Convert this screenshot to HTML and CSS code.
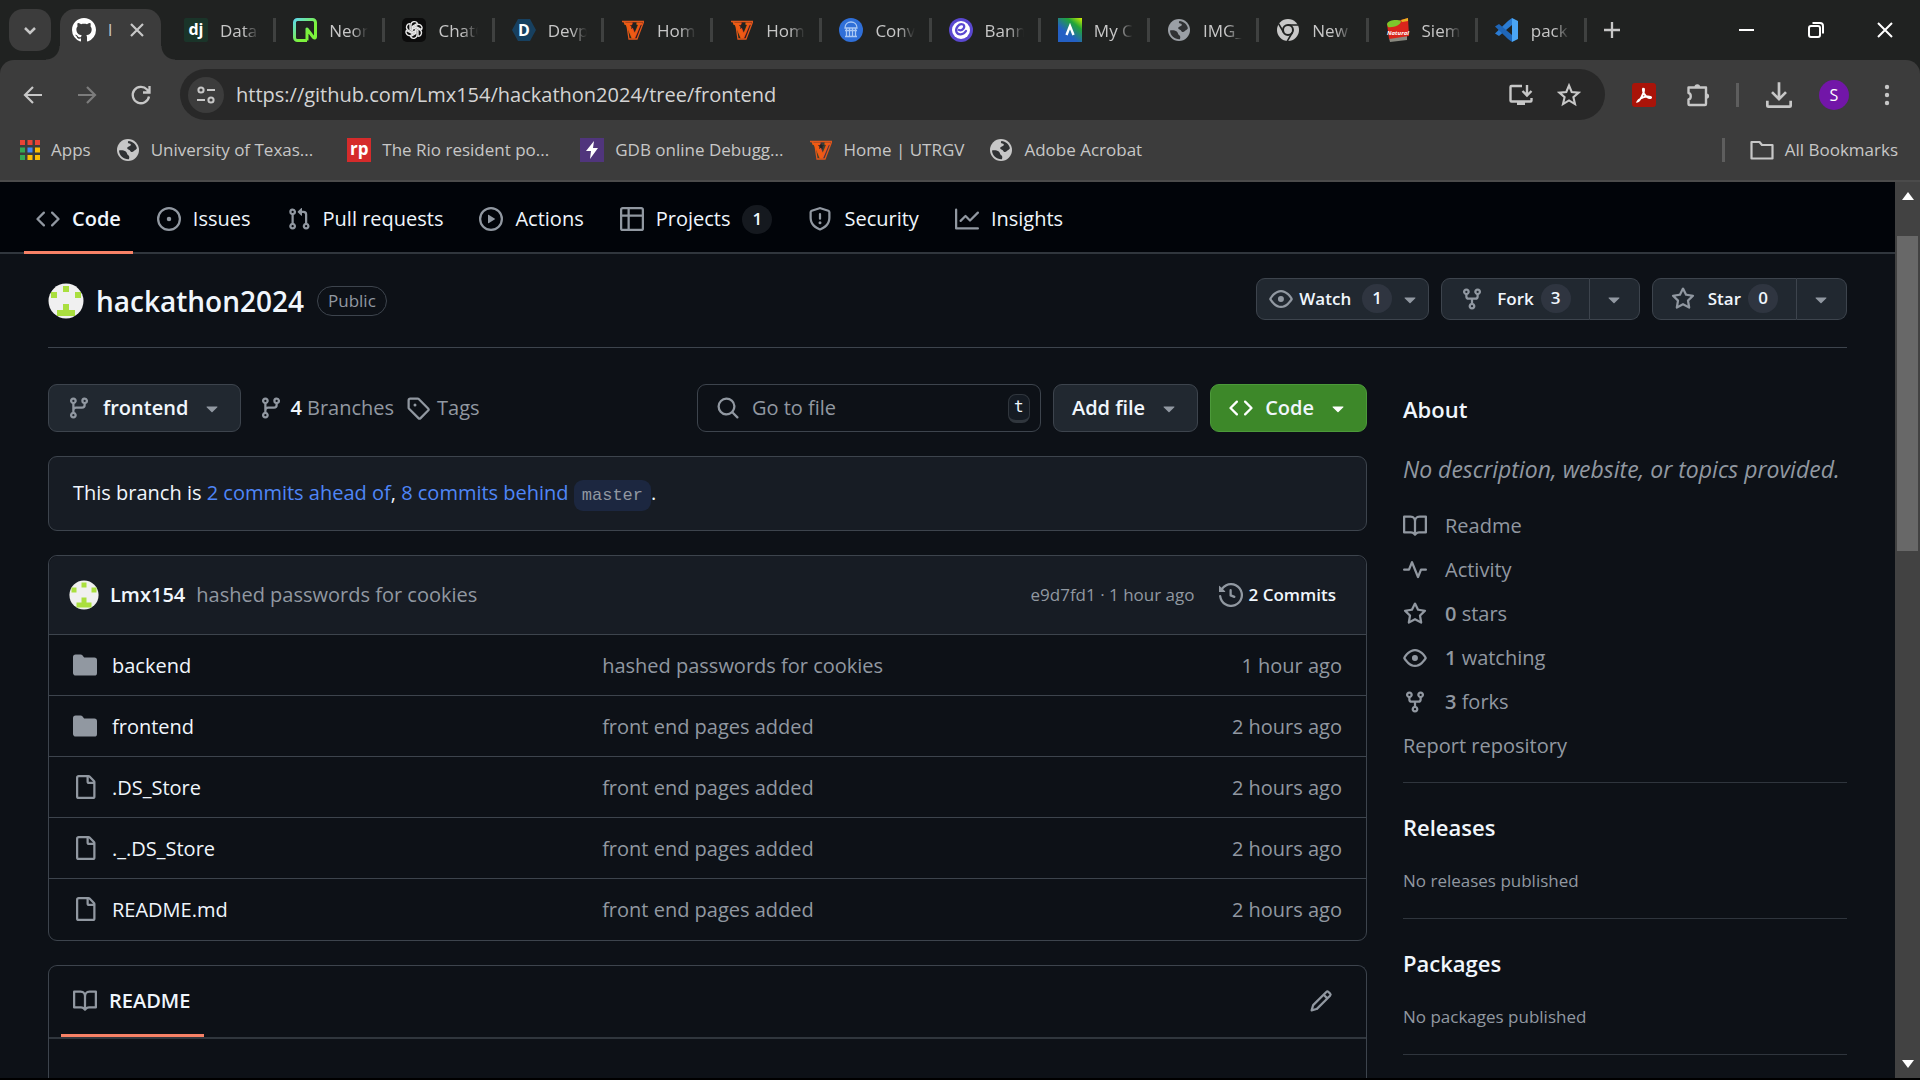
FILE: index.html
```
<!DOCTYPE html>
<html lang="en">
<head>
  <meta charset="UTF-8" />
  <meta name="viewport" content="width=device-width, initial-scale=1.0" />
  <title>Lmx154/hackathon2024 at frontend</title>
  <link rel="stylesheet" href="styles.css">
</head>
<body>
  <!-- icon sprite -->
  <svg class="sprite" aria-hidden="true">
    <symbol id="i-code" viewBox="0 0 16 16"><path d="m11.28 3.22 4.25 4.25a.75.75 0 0 1 0 1.06l-4.25 4.25a.749.749 0 0 1-1.275-.326.749.749 0 0 1 .215-.734L13.94 8l-3.72-3.72a.749.749 0 0 1 .326-1.275.749.749 0 0 1 .734.215Zm-6.56 0a.751.751 0 0 1 1.042.018.751.751 0 0 1 .018 1.042L2.06 8l3.72 3.72a.749.749 0 0 1-.326 1.275.749.749 0 0 1-.734-.215L.47 8.53a.75.75 0 0 1 0-1.06Z"/></symbol>
    <symbol id="i-issue" viewBox="0 0 16 16"><path d="M8 9.5a1.5 1.5 0 1 0 0-3 1.5 1.5 0 0 0 0 3Z"/><path d="M8 0a8 8 0 1 1 0 16A8 8 0 0 1 8 0ZM1.5 8a6.5 6.5 0 1 0 13 0 6.5 6.5 0 0 0-13 0Z"/></symbol>
    <symbol id="i-pull" viewBox="0 0 16 16"><path d="M1.5 3.25a2.25 2.25 0 1 1 3 2.122v5.256a2.251 2.251 0 1 1-1.5 0V5.372A2.25 2.25 0 0 1 1.5 3.25Zm5.677-.177L9.573.677A.25.25 0 0 1 10 .854V2.5h1A2.5 2.5 0 0 1 13.5 5v5.628a2.251 2.251 0 1 1-1.5 0V5a1 1 0 0 0-1-1h-1v1.646a.25.25 0 0 1-.427.177L7.177 3.427a.25.25 0 0 1 0-.354ZM3.75 2.5a.75.75 0 1 0 0 1.5.75.75 0 0 0 0-1.5Zm0 9.5a.75.75 0 1 0 0 1.5.75.75 0 0 0 0-1.5Zm8.25.75a.75.75 0 1 0 1.5 0 .75.75 0 0 0-1.5 0Z"/></symbol>
    <symbol id="i-play" viewBox="0 0 16 16"><path d="M8 0a8 8 0 1 1 0 16A8 8 0 0 1 8 0ZM1.5 8a6.5 6.5 0 1 0 13 0 6.5 6.5 0 0 0-13 0Zm4.879-2.773 4.264 2.559a.25.25 0 0 1 0 .428l-4.264 2.559A.25.25 0 0 1 6 10.559V5.442a.25.25 0 0 1 .379-.215Z"/></symbol>
    <symbol id="i-table" viewBox="0 0 16 16"><path d="M0 1.75C0 .784.784 0 1.75 0h12.5C15.216 0 16 .784 16 1.75v12.5A1.75 1.75 0 0 1 14.25 16H1.75A1.75 1.75 0 0 1 0 14.25ZM6.5 6.5v8h7.75a.25.25 0 0 0 .25-.25V6.5Zm8-1.5V1.75a.25.25 0 0 0-.25-.25H6.5V5Zm-13 1.5v7.75c0 .138.112.25.25.25H5v-8ZM5 5V1.5H1.75a.25.25 0 0 0-.25.25V5Z"/></symbol>
    <symbol id="i-shield" viewBox="0 0 16 16"><path d="M7.467.133a1.748 1.748 0 0 1 1.066 0l5.25 1.68A1.75 1.75 0 0 1 15 3.48V7c0 1.566-.32 3.182-1.303 4.682-.983 1.498-2.585 2.813-5.032 3.855a1.697 1.697 0 0 1-1.33 0c-2.447-1.042-4.049-2.357-5.032-3.855C1.32 10.182 1 8.566 1 7V3.48a1.75 1.75 0 0 1 1.217-1.667Zm.61 1.429a.25.25 0 0 0-.153 0l-5.25 1.68a.25.25 0 0 0-.174.238V7c0 1.358.275 2.666 1.057 3.86.784 1.194 2.121 2.34 4.366 3.297a.196.196 0 0 0 .154 0c2.245-.956 3.582-2.104 4.366-3.298C13.225 9.666 13.5 8.36 13.5 7V3.48a.251.251 0 0 0-.174-.237l-5.25-1.68ZM8.75 4.75v3a.75.75 0 0 1-1.5 0v-3a.75.75 0 0 1 1.5 0ZM9 10.5a1 1 0 1 1-2 0 1 1 0 0 1 2 0Z"/></symbol>
    <symbol id="i-graph" viewBox="0 0 16 16"><path d="M1.5 1.75V13.5h13.75a.75.75 0 0 1 0 1.5H.75a.75.75 0 0 1-.75-.75V1.75a.75.75 0 0 1 1.5 0Zm14.28 2.53-5.25 5.25a.75.75 0 0 1-1.06 0L7 7.06 4.28 9.78a.751.751 0 0 1-1.042-.018.751.751 0 0 1-.018-1.042l3.25-3.25a.75.75 0 0 1 1.06 0L10 7.94l4.72-4.72a.751.751 0 0 1 1.042.018.751.751 0 0 1 .018 1.042Z"/></symbol>
    <symbol id="i-eye" viewBox="0 0 16 16"><path d="M8 2c1.981 0 3.671.992 4.933 2.078 1.27 1.091 2.187 2.345 2.637 3.023a1.62 1.62 0 0 1 0 1.798c-.45.678-1.367 1.932-2.637 3.023C11.67 13.008 9.981 14 8 14c-1.981 0-3.671-.992-4.933-2.078C1.797 10.83.88 9.576.43 8.898a1.62 1.62 0 0 1 0-1.798c.45-.677 1.367-1.931 2.637-3.022C4.33 2.992 6.019 2 8 2ZM1.679 7.932a.12.12 0 0 0 0 .136c.411.622 1.241 1.75 2.366 2.717C5.176 11.758 6.527 12.5 8 12.5c1.473 0 2.825-.742 3.955-1.715 1.124-.967 1.954-2.096 2.366-2.717a.12.12 0 0 0 0-.136c-.412-.621-1.242-1.75-2.366-2.717C10.824 4.242 9.473 3.5 8 3.5c-1.473 0-2.825.742-3.955 1.715-1.124.967-1.954 2.096-2.366 2.717ZM8 10a2 2 0 1 1-.001-3.999A2 2 0 0 1 8 10Z"/></symbol>
    <symbol id="i-fork" viewBox="0 0 16 16"><path d="M5 5.372v.878c0 .414.336.75.75.75h4.5a.75.75 0 0 0 .75-.75v-.878a2.25 2.25 0 1 1 1.5 0v.878a2.25 2.25 0 0 1-2.25 2.25h-1.5v2.128a2.251 2.251 0 1 1-1.5 0V8.5h-1.5A2.25 2.25 0 0 1 3.5 6.25v-.878a2.25 2.25 0 1 1 1.5 0ZM5 3.25a.75.75 0 1 0-1.5 0 .75.75 0 0 0 1.5 0Zm6.75.75a.75.75 0 1 0 0-1.5.75.75 0 0 0 0 1.5Zm-3 8.75a.75.75 0 1 0-1.5 0 .75.75 0 0 0 1.5 0Z"/></symbol>
    <symbol id="i-star" viewBox="0 0 16 16"><path d="M8 .25a.75.75 0 0 1 .673.418l1.882 3.815 4.21.612a.75.75 0 0 1 .416 1.279l-3.046 2.97.719 4.192a.751.751 0 0 1-1.088.791L8 12.347l-3.766 1.98a.75.75 0 0 1-1.088-.79l.72-4.194L.818 6.374a.75.75 0 0 1 .416-1.28l4.21-.611L7.327.668A.75.75 0 0 1 8 .25Zm0 2.445L6.615 5.5a.75.75 0 0 1-.564.41l-3.097.45 2.24 2.184a.75.75 0 0 1 .216.664l-.528 3.084 2.769-1.456a.75.75 0 0 1 .698 0l2.77 1.456-.53-3.084a.75.75 0 0 1 .216-.664l2.24-2.183-3.096-.45a.75.75 0 0 1-.564-.41L8 2.694Z"/></symbol>
    <symbol id="i-branch" viewBox="0 0 16 16"><path d="M9.5 3.25a2.25 2.25 0 1 1 3 2.122V6A2.5 2.5 0 0 1 10 8.5H6a1 1 0 0 0-1 1v1.128a2.251 2.251 0 1 1-1.5 0V5.372a2.25 2.25 0 1 1 1.5 0v1.836A2.493 2.493 0 0 1 6 7h4a1 1 0 0 0 1-1v-.628A2.25 2.25 0 0 1 9.5 3.25Zm-6 0a.75.75 0 1 0 1.5 0 .75.75 0 0 0-1.5 0Zm8.25-.75a.75.75 0 1 0 0 1.5.75.75 0 0 0 0-1.5ZM4.25 12a.75.75 0 1 0 0 1.5.75.75 0 0 0 0-1.5Z"/></symbol>
    <symbol id="i-tag" viewBox="0 0 16 16"><path d="M1 7.775V2.75C1 1.784 1.784 1 2.75 1h5.025c.464 0 .91.184 1.238.513l6.25 6.25a1.75 1.75 0 0 1 0 2.474l-5.026 5.026a1.75 1.75 0 0 1-2.474 0l-6.25-6.25A1.752 1.752 0 0 1 1 7.775Zm1.5 0c0 .066.026.13.073.177l6.25 6.25a.25.25 0 0 0 .354 0l5.025-5.025a.25.25 0 0 0 0-.354l-6.25-6.25a.25.25 0 0 0-.177-.073H2.75a.25.25 0 0 0-.25.25ZM6 5a1 1 0 1 1 0 2 1 1 0 0 1 0-2Z"/></symbol>
    <symbol id="i-search" viewBox="0 0 16 16"><path d="M10.68 11.74a6 6 0 0 1-7.922-8.982 6 6 0 0 1 8.982 7.922l3.04 3.04a.749.749 0 0 1-.326 1.275.749.749 0 0 1-.734-.215ZM11.5 7a4.499 4.499 0 1 0-8.997 0A4.499 4.499 0 0 0 11.5 7Z"/></symbol>
    <symbol id="i-history" viewBox="0 0 16 16"><path d="m.427 1.927 1.215 1.215a8.002 8.002 0 1 1-1.6 5.685.75.75 0 1 1 1.493-.154 6.5 6.5 0 1 0 1.18-4.458l1.358 1.358A.25.25 0 0 1 3.896 6H.25A.25.25 0 0 1 0 5.75V2.104a.25.25 0 0 1 .427-.177ZM7.75 4a.75.75 0 0 1 .75.75v2.992l2.028.812a.75.75 0 0 1-.557 1.392l-2.5-1A.751.751 0 0 1 7 8.25v-3.5A.75.75 0 0 1 7.75 4Z"/></symbol>
    <symbol id="i-folder" viewBox="0 0 16 16"><path d="M1.75 1A1.75 1.75 0 0 0 0 2.75v10.5C0 14.216.784 15 1.75 15h12.5A1.75 1.75 0 0 0 16 13.25v-8.5A1.75 1.75 0 0 0 14.25 3H7.5a.25.25 0 0 1-.2-.1l-.9-1.2C6.07 1.26 5.55 1 5 1H1.75Z"/></symbol>
    <symbol id="i-file" viewBox="0 0 16 16"><path d="M2 1.75C2 .784 2.784 0 3.75 0h6.586c.464 0 .909.184 1.237.513l2.914 2.914c.329.328.513.773.513 1.237v9.586A1.75 1.75 0 0 1 13.25 16h-9.5A1.75 1.75 0 0 1 2 14.25Zm1.75-.25a.25.25 0 0 0-.25.25v12.5c0 .138.112.25.25.25h9.5a.25.25 0 0 0 .25-.25V6h-2.75A1.75 1.75 0 0 1 9 4.25V1.5Zm6.75.062V4.25c0 .138.112.25.25.25h2.688l-.011-.013-2.914-2.914-.013-.011Z"/></symbol>
    <symbol id="i-book" viewBox="0 0 16 16"><path d="M0 1.75A.75.75 0 0 1 .75 1h4.253c1.227 0 2.317.59 3 1.501A3.743 3.743 0 0 1 11.006 1h4.245a.75.75 0 0 1 .75.75v10.5a.75.75 0 0 1-.75.75h-4.507a2.25 2.25 0 0 0-1.591.659l-.622.621a.75.75 0 0 1-1.06 0l-.622-.621A2.25 2.25 0 0 0 5.258 13H.75a.75.75 0 0 1-.75-.75Zm7.251 10.324.004-5.073-.002-2.253A2.25 2.25 0 0 0 5.003 2.5H1.5v9h3.757a3.75 3.75 0 0 1 1.994.574ZM8.755 4.75l-.004 7.322a3.752 3.752 0 0 1 1.992-.572H14.5v-9h-3.495a2.25 2.25 0 0 0-2.25 2.25Z"/></symbol>
    <symbol id="i-pulse" viewBox="0 0 16 16"><path d="M6 2c.306 0 .582.187.696.471L10 10.731l1.304-3.26A.751.751 0 0 1 12 7h3.25a.75.75 0 0 1 0 1.5h-2.742l-1.812 4.528a.751.751 0 0 1-1.392 0L6 4.77 4.696 8.03A.75.75 0 0 1 4 8.5H.75a.75.75 0 0 1 0-1.5h2.742l1.812-4.529A.751.751 0 0 1 6 2Z"/></symbol>
    <symbol id="i-pencil" viewBox="0 0 16 16"><path d="M11.013 1.427a1.75 1.75 0 0 1 2.474 0l1.086 1.086a1.75 1.75 0 0 1 0 2.474l-8.61 8.61c-.21.21-.47.364-.756.445l-3.251.93a.75.75 0 0 1-.927-.928l.929-3.25c.081-.286.235-.547.445-.758l8.61-8.61Zm.176 4.823L9.75 4.81l-6.286 6.287a.253.253 0 0 0-.064.108l-.558 1.953 1.953-.558a.253.253 0 0 0 .108-.064Zm1.238-3.763a.25.25 0 0 0-.354 0L10.811 3.75l1.439 1.44 1.263-1.263a.25.25 0 0 0 0-.354Z"/></symbol>
    <symbol id="i-caret" viewBox="0 0 16 16"><path d="m4.427 7.427 3.396 3.396a.25.25 0 0 0 .354 0l3.396-3.396A.25.25 0 0 0 11.396 7H4.604a.25.25 0 0 0-.177.427Z"/></symbol>
    <symbol id="i-github" viewBox="0 0 16 16"><path fill="#fff" d="M8 0c4.42 0 8 3.58 8 8a8.013 8.013 0 0 1-5.45 7.59c-.4.08-.55-.17-.55-.38 0-.27.01-1.13.01-2.2 0-.75-.25-1.23-.54-1.48 1.78-.2 3.65-.88 3.65-3.95 0-.88-.31-1.59-.82-2.15.08-.2.36-1.02-.08-2.12 0 0-.67-.22-2.2.82-.64-.18-1.32-.27-2-.27-.68 0-1.36.09-2 .27-1.53-1.03-2.2-.82-2.2-.82-.44 1.1-.16 1.92-.08 2.12-.51.56-.82 1.28-.82 2.15 0 3.06 1.86 3.75 3.64 3.95-.23.2-.44.55-.51 1.07-.46.21-1.61.55-2.33-.66-.15-.24-.6-.83-1.23-.82-.67.01-.27.38.01.53.34.19.73.9.82 1.13.16.45.68 1.31 2.69.94 0 .67.01 1.3.01 1.49 0 .21-.15.45-.55.38A7.995 7.995 0 0 1 0 8c0-4.42 3.58-8 8-8Z"/></symbol>
    <symbol id="i-globe" viewBox="0 0 24 24"><circle cx="12" cy="12" r="11" fill="currentColor"/><path fill="#303234" d="M3 12.500c2-.6 5-.3 6.800 1 1.500 1.100.8 2.700 2.200 3.500 1.300.8 1.800 2.500.8 4.200C7.800 21.500 3.200 17.800 3 12.500ZM12.500 3c4.200.3 7.600 3.300 8.400 7.300-.8 1.700-2.300 1.700-3.300 2.900-1 1.200-2.900.9-3.500-.5-.5-1.200-2.900-.8-2.900-2.600 0-1.500 2-1.500 3.100-2.300 1.200-.9.300-2.300-1-2.300-1.500 0-1.900-1.600-.8-2.500Z"/></symbol>
    <symbol id="i-vaquero" viewBox="0 0 24 24"><path fill="none" stroke="#e2571b" stroke-width="1.300" d="M1 3.500h22M3 4l3 3.500 2 13.500h8l5-13 1.500-4"/><text x="12" y="20" text-anchor="middle" font-family="DejaVu Serif, serif" font-weight="700" font-size="21" fill="#f05a14" stroke="#f05a14">V</text><path fill="#222" d="m12 5 .9 2.200 2.300.1-1.800 1.500.6 2.300-2-1.300-2 1.300.6-2.300-1.800-1.500 2.300-.1Z"/></symbol>
    <symbol id="i-avatar" viewBox="0 0 36 36"><circle cx="18" cy="18" r="17.500" fill="#f0f0f0"/><path fill="#aadf3f" d="M15 3h6v6h-6zM3 9h6v6H3zM27 9h6v6h-6zM15 21h6v6h6v6H9v-6h6z"/></symbol>
  </svg>

  <header class="browser">
    <div class="tabstrip">
      <button class="tab-search" aria-label="Search tabs"><svg class="ico" viewBox="0 0 24 24"><path class="line" stroke-width="2.500" d="m7 10 5 5 5-5"/></svg></button>
      <div class="tab-active">
        <svg class="ico"><use href="#i-github"/></svg>
        <span>l</span>
        <button class="plain" aria-label="Close tab"><svg class="ico-sm" viewBox="0 0 20 20"><path class="line" stroke-width="2.200" d="m4 4 12 12M16 4 4 16"/></svg></button>
      </div>
      <div class="tabs">
        <button class="tab"><svg class="ico" viewBox="0 0 24 24"><rect width="24" height="24" rx="2" fill="#1a3429"/><text x="12" y="17" text-anchor="middle" font-family="Open Sans, sans-serif" font-weight="700" font-size="16" fill="#fff">dj</text></svg><span>Datab</span></button>
        <button class="tab"><svg class="ico" viewBox="0 0 24 24"><defs><linearGradient id="neon" x1="0" y1="0" x2="1" y2="1"><stop offset="0" stop-color="#5fd9e8"/><stop offset=".6" stop-color="#7cf23c"/></linearGradient></defs><path fill="none" stroke="url(#neon)" stroke-width="3" stroke-linejoin="round" d="M14 22.500H4.500a3 3 0 0 1-3-3v-15a3 3 0 0 1 3-3h15a3 3 0 0 1 3 3V19c0 1-1 1.500-2 .5l-6.500-8.500V22.500"/></svg><span>Neon</span></button>
        <button class="tab"><svg class="ico" viewBox="0 0 24 24"><rect width="24" height="24" rx="5" fill="#0c0c0c"/><g fill="none" stroke="#e8e8e8" stroke-width="1.300"><path id="petal" d="M9 12V7a3.500 3.500 0 0 1 6.500-1.700l-5 3v4.500"/><use href="#petal" transform="rotate(60 12 12)"/><use href="#petal" transform="rotate(120 12 12)"/><use href="#petal" transform="rotate(180 12 12)"/><use href="#petal" transform="rotate(240 12 12)"/><use href="#petal" transform="rotate(300 12 12)"/></g></svg><span>ChatG</span></button>
        <button class="tab"><svg class="ico" viewBox="0 0 24 24"><path fill="#17405f" d="M6 1h12l6 11-6 11H6L0 12Z"/><text x="12" y="18" text-anchor="middle" font-family="Open Sans, sans-serif" font-weight="700" font-size="16" fill="#fff">D</text></svg><span>Devp</span></button>
        <button class="tab"><svg class="ico"><use href="#i-vaquero"/></svg><span>Hom</span></button>
        <button class="tab"><svg class="ico"><use href="#i-vaquero"/></svg><span>Hom</span></button>
        <button class="tab"><svg class="ico" viewBox="0 0 24 24"><circle cx="12" cy="12" r="12" fill="#2f6fd8"/><path fill="none" stroke="#a9c8f5" stroke-width="1.300" d="M6 10c0-8 12-8 12 0ZM6 18.500h12M7.500 10v8M10.500 10v8M13.500 10v8M16.500 10v8M6 12.500h12"/></svg><span>Conv</span></button>
        <button class="tab"><svg class="ico" viewBox="0 0 24 24"><circle cx="12" cy="12" r="12" fill="#5a48d0"/><circle cx="12" cy="12" r="9" fill="#fff"/><path fill="none" stroke="#5a48d0" stroke-width="2.300" stroke-linecap="round" d="M10 12c4 1.500 7-4 4-5.500C10 5 6 10 7.500 14c1.500 3.500 7 3 9.500-1"/></svg><span>Bann</span></button>
        <button class="tab"><svg class="ico" viewBox="0 0 24 24"><defs><linearGradient id="myc" x1="1" y1="0" x2=".2" y2="1"><stop offset="0" stop-color="#d6f000"/><stop offset=".3" stop-color="#22a637"/><stop offset=".7" stop-color="#2460c4"/></linearGradient></defs><path fill="url(#myc)" d="M0 0h24v24H0z"/><path fill="none" stroke="#fff" stroke-width="2.400" d="m8.500 17 3.500-9 3.500 9"/></svg><span>My C</span></button>
        <button class="tab"><svg class="ico gray"><use href="#i-globe"/></svg><span>IMG_</span></button>
        <button class="tab"><svg class="ico" viewBox="0 0 24 24"><circle cx="12" cy="12" r="11" fill="#c8c8c8"/><circle cx="12" cy="12" r="5" fill="#c8c8c8" stroke="#202221" stroke-width="2"/><path fill="none" stroke="#202221" stroke-width="1.600" d="M12 7h10M7.700 14.500l-5-8.600M16.300 14.500l-5 8.600"/></svg><span>New</span></button>
        <button class="tab"><svg class="ico" viewBox="0 0 24 24"><path fill="#8a8a80" d="m3 20 18-3v5L4 24Z"/><path fill="#d9251c" d="m1 6 21-6 1 18L3 21Z"/><path fill="#7ec62b" d="M1 6c1-4 10-5 14-3 0 4-8 7-13 6Z"/><path fill="#e8b020" d="m15 2 7-2v3l-6 1Z"/><text x="12" y="17" text-anchor="middle" font-family="Open Sans, sans-serif" font-style="italic" font-weight="700" font-size="6" fill="#fff">Natural</text></svg><span>Siem</span></button>
        <button class="tab"><svg class="ico" viewBox="0 0 24 24"><path fill="#2b7cd3" d="M17 0v7L4 18 0 15.500 13 3Z"/><path fill="#1f66b8" d="M17 24v-7L4 6 0 8.500 13 21Z"/><path fill="#4aa5f5" d="m17 0 6 3v18l-6 3Z"/></svg><span>pack</span></button>
      </div>
      <button class="plain new-tab" aria-label="New tab"><svg class="ico-sm" viewBox="0 0 20 20"><path class="line" stroke-width="2.300" d="M10 2v16M2 10h16"/></svg></button>
      <div class="window-controls">
        <button class="plain" aria-label="Minimize"><svg class="ico-sm" viewBox="0 0 20 20"><path class="line" stroke-width="2" d="M2 10h15"/></svg></button>
        <button class="plain" aria-label="Restore"><svg class="ico-sm" viewBox="0 0 20 20"><rect class="line" stroke-width="2" x="3" y="6" width="11" height="11" rx="2"/><path class="line" stroke-width="2" d="M6.500 3H14a3 3 0 0 1 3 3v7.500"/></svg></button>
        <button class="plain" aria-label="Close"><svg class="ico-sm" viewBox="0 0 20 20"><path class="line" stroke-width="2" d="m3 3 14 14M17 3 3 17"/></svg></button>
      </div>
    </div>

    <div class="toolbar">
      <div class="nav-buttons">
        <button class="plain" aria-label="Back"><svg class="ico" viewBox="0 0 24 24"><path class="line" stroke-width="2.200" d="M21 12H4M12 4l-8 8 8 8"/></svg></button>
        <button class="plain dim" aria-label="Forward"><svg class="ico" viewBox="0 0 24 24"><path class="line" stroke-width="2.200" d="M3 12h17M12 4l8 8-8 8"/></svg></button>
        <button class="plain" aria-label="Reload"><svg class="ico" viewBox="0 0 24 24"><path class="line" stroke-width="2.300" d="M20 13.500A8.200 8.200 0 1 1 18 6.500l2 2.500M20.500 3v6.500H14"/></svg></button>
      </div>
      <div class="omnibox">
        <button class="site-info" aria-label="Site information"><svg class="ico" viewBox="0 0 24 24"><circle class="line" stroke-width="2" cx="7" cy="7" r="2.600"/><circle class="line" stroke-width="2" cx="17" cy="17" r="2.600"/><path class="line" stroke-width="2" d="M13 7h8M3 17h8"/></svg></button>
        <input class="url" type="text" aria-label="Address" value="https://github.com/Lmx154/hackathon2024/tree/frontend">
        <button class="plain" aria-label="Install"><svg class="ico" viewBox="0 0 24 24"><path class="line" stroke-width="2.400" d="M13 3H2.500a1 1 0 0 0-1 1v13.500a1 1 0 0 0 1 1h19a1 1 0 0 0 1-1V15M18 2v10M13.500 8l4.500 4.500L22.500 8"/><path d="M8 18.500h8V22H8Z"/></svg></button>
        <button class="plain" aria-label="Bookmark"><svg class="ico" viewBox="0 0 24 24"><path class="line" stroke-width="2.100" d="m12 2.500 2.700 6.500 7 .6-5.300 4.600 1.600 6.900-6-3.700-6 3.700 1.600-6.900L2.300 9.600l7-.6Z"/></svg></button>
      </div>
      <div class="extensions">
        <svg class="ico" viewBox="0 0 24 24"><rect width="24" height="24" rx="3" fill="#a91409"/><path fill="none" stroke="#fff" stroke-width="1.900" d="M5.500 18.500c2-.5 7-8 6.500-12.500-1.500-1.500-1.500 1.500 0 4.500 1.500 2.800 4.500 5 6.500 4.500s-1-2-4-1.500-8 2.500-9 5Z"/></svg>
        <button class="plain" aria-label="Extensions"><svg class="ico" viewBox="0 0 24 24"><path class="line" stroke-width="2.400" stroke-linejoin="round" d="M2.500 4.500h17.500v16.500a1 1 0 0 1-1 1H3.500a1 1 0 0 1-1-1V16.500c3-.5 3-6 0-6.500Z"/><path d="M8.500 4a2.800 2.800 0 0 1 5.600 0ZM20.500 10.500a2.600 2.600 0 0 1 0 5.200Z"/></svg></button>
        <span class="divider"></span>
        <button class="plain" aria-label="Downloads"><svg class="ico-lg" viewBox="0 0 24 24"><path class="line" stroke-width="2.300" d="M12 1v14M6 9.500l6 6 6-6M2 17v4a1 1 0 0 0 1 1h18a1 1 0 0 0 1-1v-4"/></svg></button>
        <button class="profile">S</button>
        <button class="plain" aria-label="Menu"><svg class="ico" viewBox="0 0 24 24"><circle cx="12" cy="4" r="2.200"/><circle cx="12" cy="12" r="2.200"/><circle cx="12" cy="20" r="2.200"/></svg></button>
      </div>
    </div>

    <nav class="bookmarks">
      <a href="#"><svg class="ico-sm" viewBox="0 0 20 20"><path fill="#ea4335" d="M0 0h5v5H0zM7.500 0h5v5h-5zM15 0h5v5h-5z"/><path fill="#34a853" d="M0 7.500h5v5H0zM0 15h5v5H0z"/><path fill="#4285f4" d="M7.500 7.500h5v5h-5z"/><path fill="#fbbc04" d="M15 7.500h5v5h-5zM7.500 15h5v5h-5zM15 15h5v5h-5z"/></svg>Apps</a>
      <a href="#"><svg class="ico"><use href="#i-globe"/></svg>University of Texas...</a>
      <a class="wide" href="#"><span class="fav fav-rp">rp</span>The Rio resident po...</a>
      <a href="#"><svg class="ico" viewBox="0 0 24 24"><path fill="#50357c" d="M0 0h24v24H0z"/><path fill="#fff" d="M14 3 6 13h5l-1 8 8-11h-5Z"/></svg>GDB online Debugg...</a>
      <a href="#"><svg class="ico"><use href="#i-vaquero"/></svg>Home | UTRGV</a>
      <a href="#"><svg class="ico"><use href="#i-globe"/></svg>Adobe Acrobat</a>
      <span class="divider push"></span>
      <a href="#"><svg class="ico" viewBox="0 0 24 24"><path class="line" stroke-width="2.200" stroke-linejoin="round" d="M1.500 4h8l2.500 3h10.500v13.500h-21Z"/></svg>All Bookmarks</a>
    </nav>
  </header>

  <div class="viewport">
    <div class="page">
      <nav class="repo-nav">
        <a class="current" href="#"><svg class="ico"><use href="#i-code"/></svg>Code</a>
        <a href="#"><svg class="ico"><use href="#i-issue"/></svg>Issues</a>
        <a href="#"><svg class="ico"><use href="#i-pull"/></svg>Pull requests</a>
        <a href="#"><svg class="ico"><use href="#i-play"/></svg>Actions</a>
        <a href="#"><svg class="ico"><use href="#i-table"/></svg>Projects<span class="counter">1</span></a>
        <a href="#"><svg class="ico"><use href="#i-shield"/></svg>Security</a>
        <a href="#"><svg class="ico"><use href="#i-graph"/></svg>Insights</a>
      </nav>

      <main class="container">
        <div class="repo-head">
          <svg class="avatar"><use href="#i-avatar"/></svg>
          <h1>hackathon2024</h1>
          <span class="visibility">Public</span>
          <div class="actions">
            <button class="btn small watch"><svg class="ico"><use href="#i-eye"/></svg>Watch<span class="counter">1</span><svg class="ico"><use href="#i-caret"/></svg></button>
            <div class="btn-group">
              <button class="btn small"><svg class="ico"><use href="#i-fork"/></svg>Fork<span class="counter">3</span></button>
              <button class="btn small more" aria-label="Fork options"><svg class="ico"><use href="#i-caret"/></svg></button>
            </div>
            <div class="btn-group">
              <button class="btn small"><svg class="ico"><use href="#i-star"/></svg>Star<span class="counter">0</span></button>
              <button class="btn small more" aria-label="Star options"><svg class="ico"><use href="#i-caret"/></svg></button>
            </div>
          </div>
        </div>

        <div class="columns">
          <div class="main-col">
            <div class="file-nav">
              <button class="btn branch"><svg class="ico"><use href="#i-branch"/></svg>frontend<svg class="ico"><use href="#i-caret"/></svg></button>
              <a class="stat" href="#"><svg class="ico"><use href="#i-branch"/></svg><span><strong>4</strong> Branches</span></a>
              <a class="stat" href="#"><svg class="ico"><use href="#i-tag"/></svg>Tags</a>
              <label class="go-to">
                <svg class="ico"><use href="#i-search"/></svg>
                <input type="text" placeholder="Go to file" aria-label="Go to file">
                <kbd>t</kbd>
              </label>
              <button class="btn">Add file<svg class="ico"><use href="#i-caret"/></svg></button>
              <button class="btn green"><svg class="ico"><use href="#i-code"/></svg>Code<svg class="ico"><use href="#i-caret"/></svg></button>
            </div>

            <div class="box branch-info">
              This branch is <a href="#">2 commits ahead of</a>, <a href="#">8 commits behind</a> <code>master</code>.
            </div>

            <div class="box files">
              <div class="commit">
                <svg class="avatar"><use href="#i-avatar"/></svg>
                <a class="author" href="#">Lmx154</a>
                <a class="message" href="#">hashed passwords for cookies</a>
                <span class="sha">e9d7fd1 · 1 hour ago</span>
                <a class="count" href="#"><svg class="ico"><use href="#i-history"/></svg>2 Commits</a>
              </div>
              <table>
                <tr><td class="name"><svg class="ico"><use href="#i-folder"/></svg><a href="#">backend</a></td><td>hashed passwords for cookies</td><td class="date">1 hour ago</td></tr>
                <tr><td class="name"><svg class="ico"><use href="#i-folder"/></svg><a href="#">frontend</a></td><td>front end pages added</td><td class="date">2 hours ago</td></tr>
                <tr><td class="name"><svg class="ico"><use href="#i-file"/></svg><a href="#">.DS_Store</a></td><td>front end pages added</td><td class="date">2 hours ago</td></tr>
                <tr><td class="name"><svg class="ico"><use href="#i-file"/></svg><a href="#">._.DS_Store</a></td><td>front end pages added</td><td class="date">2 hours ago</td></tr>
                <tr><td class="name"><svg class="ico"><use href="#i-file"/></svg><a href="#">README.md</a></td><td>front end pages added</td><td class="date">2 hours ago</td></tr>
              </table>
            </div>

            <div class="box readme">
              <div class="readme-head">
                <a class="readme-tab" href="#"><svg class="ico"><use href="#i-book"/></svg>README</a>
                <button class="plain edit" aria-label="Edit file"><svg class="ico"><use href="#i-pencil"/></svg></button>
              </div>
            </div>
          </div>

          <aside class="sidebar">
            <section class="about">
              <h2>About</h2>
              <p class="empty">No description, website, or topics provided.</p>
              <ul>
                <li><a href="#"><svg class="ico"><use href="#i-book"/></svg>Readme</a></li>
                <li><a href="#"><svg class="ico"><use href="#i-pulse"/></svg>Activity</a></li>
                <li><a href="#"><svg class="ico"><use href="#i-star"/></svg><span><strong>0</strong> stars</span></a></li>
                <li><a href="#"><svg class="ico"><use href="#i-eye"/></svg><span><strong>1</strong> watching</span></a></li>
                <li><a href="#"><svg class="ico"><use href="#i-fork"/></svg><span><strong>3</strong> forks</span></a></li>
                <li><a href="#">Report repository</a></li>
              </ul>
            </section>
            <section>
              <h2>Releases</h2>
              <p>No releases published</p>
            </section>
            <section>
              <h2>Packages</h2>
              <p>No packages published</p>
            </section>
          </aside>
        </div>
      </main>
    </div>

    <div class="scrollbar">
      <svg class="arrow" viewBox="0 0 12 8"><path d="m6 0 6 8H0Z"/></svg>
      <div class="thumb"></div>
      <svg class="arrow" viewBox="0 0 12 8"><path d="M0 0h12L6 8Z"/></svg>
    </div>
  </div>
</body>
</html>
```

FILE: styles.css
```
* {
  box-sizing: border-box;
}

body {
  margin: 0;
  height: 100vh;
  display: flex;
  flex-direction: column;
  overflow: hidden;
  background: #000;
  color: #f0f6fc;
  font-family: "Open Sans", "Noto Sans", sans-serif;
  font-size: 20px;
  line-height: 28px;
}

a {
  color: inherit;
  text-decoration: none;
}

h1, h2, p, ul {
  margin: 0;
  padding: 0;
  font-weight: 600;
}

button, input {
  font: inherit;
  color: inherit;
}

svg {
  fill: currentColor;
  flex: none;
}

.sprite {
  position: absolute;
  width: 0;
  height: 0;
}

.ico {
  width: 24px;
  height: 24px;
}

.ico-sm {
  width: 20px;
  height: 20px;
}

.ico-lg {
  width: 28px;
  height: 28px;
}

.line {
  fill: none;
  stroke: currentColor;
}

.plain {
  display: flex;
  padding: 0;
  border: 0;
  background: none;
}

.divider {
  width: 3px;
  height: 24px;
  background: #5e5e5e;
}

/* browser window */
.browser {
  flex: none;
  background: #202221;
  color: #c7c7c7;
  border-bottom: 2px solid #4b4b4b;
  font-size: 17px;
}

.tabstrip {
  display: flex;
  align-items: center;
  height: 60px;
  padding-left: 9px;
}

.tab-search {
  display: flex;
  align-items: center;
  justify-content: center;
  width: 42px;
  height: 42px;
  padding: 0;
  border: 0;
  border-radius: 14px;
  background: #3c3c3c;
}

.tab-active {
  position: relative;
  display: flex;
  align-items: center;
  align-self: flex-end;
  gap: 12px;
  width: 101px;
  height: 51px;
  margin-left: 9px;
  padding: 0 14px 9px 12px;
  border-radius: 15px 15px 0 0;
  background: #3c3c3c;
}

/* curved feet of the active tab */
.tab-active::before,
.tab-active::after {
  content: "";
  position: absolute;
  bottom: 0;
  width: 14px;
  height: 14px;
}

.tab-active::before {
  right: 100%;
  background: radial-gradient(circle at 0 0, transparent 13px, #3c3c3c 14px);
}

.tab-active::after {
  left: 100%;
  background: radial-gradient(circle at 100% 0, transparent 13px, #3c3c3c 14px);
}

.tab-active span {
  width: 6px;
}

.tab-active .plain {
  margin-left: auto;
}

.tabs {
  flex: 1;
  display: grid;
  grid-template-columns: repeat(13, minmax(0, 1fr));
  margin-left: 6px;
}

.tab {
  display: flex;
  align-items: center;
  gap: 12px;
  height: 24px;
  padding: 0 14px 0 17px;
  border: 0;
  border-right: 3px solid #3f4140;
  background: none;
}

.tab span {
  flex: 1;
  overflow: hidden;
  padding-top: 2px;
  text-align: left;
  white-space: nowrap;
  -webkit-mask-image: linear-gradient(90deg, #000 60%, transparent);
  mask-image: linear-gradient(90deg, #000 60%, transparent);
}

.tab .gray {
  color: #9a9fa5;
}

.new-tab {
  margin: 0 115px 0 15px;
}

.window-controls {
  display: flex;
  gap: 49px;
  padding-right: 25px;
  color: #fff;
}

.toolbar {
  display: flex;
  align-items: center;
  height: 69px;
  padding: 0 21px;
  border-radius: 14px 14px 0 0;
  background: #3c3c3c;
}

.nav-buttons {
  display: flex;
  gap: 30px;
}

.dim {
  color: #7c7c7c;
}

.omnibox {
  flex: 1;
  display: flex;
  align-items: center;
  gap: 24px;
  height: 51px;
  margin-left: 27px;
  padding: 0 24px 0 8px;
  border-radius: 26px;
  background: #282828;
}

.site-info {
  display: flex;
  align-items: center;
  justify-content: center;
  width: 36px;
  height: 36px;
  margin-right: -12px;
  padding: 0;
  border: 0;
  border-radius: 50%;
  background: #3c3c3c;
}

.url {
  flex: 1;
  min-width: 0;
  padding: 0;
  border: 0;
  outline: 0;
  background: none;
  color: #d4d4d4;
  font-size: 20px;
}

.extensions {
  display: flex;
  align-items: center;
  gap: 26px;
  margin-left: 27px;
}

.extensions > :nth-child(2) {
  margin-left: 4px;
}

.profile {
  width: 30px;
  height: 30px;
  padding: 0;
  border: 0;
  border-radius: 50%;
  background: #7216a8;
  color: #fff;
  font-size: 16px;
}

.bookmarks {
  display: flex;
  align-items: center;
  gap: 25px;
  height: 51px;
  padding: 0 22px 9px 20px;
  background: #3c3c3c;
}

.bookmarks a {
  display: flex;
  align-items: center;
  gap: 11px;
  white-space: nowrap;
}

.bookmarks .wide {
  margin: 0 6px 0 9px;
}

.fav {
  width: 24px;
  height: 24px;
  font-weight: 700;
  line-height: 22px;
  text-align: center;
  color: #fff;
}

.fav-rp {
  background: #d52b2b;
}

.push {
  margin-left: auto;
}

/* page */
.viewport {
  flex: 1;
  min-height: 0;
  display: flex;
  margin-bottom: 2px;
}

.page {
  flex: 1;
  min-width: 0;
  display: flex;
  flex-direction: column;
  overflow: hidden;
  background: #0d1117;
}

.repo-nav {
  flex: none;
  display: flex;
  gap: 12px;
  height: 72px;
  padding: 0 24px;
  border-bottom: 2px solid #30363d;
  background: #010409;
}

.repo-nav a {
  display: flex;
  align-items: center;
  gap: 12px;
  height: 72px;
  padding: 2px 12px 0;
}

.repo-nav .current {
  border-bottom: 3px solid #f78166;
  padding-top: 4px;
  font-weight: 600;
}

.repo-nav .ico {
  color: #9198a1;
}

.counter {
  min-width: 30px;
  height: 29px;
  border-radius: 15px;
  background: #2f3540;
  font-size: 17px;
  font-weight: 600;
  text-align: center;
}

.repo-nav .counter {
  background: #15191f;
}

.container {
  flex: 1;
  min-height: 0;
  display: flex;
  flex-direction: column;
  padding: 0 48px;
}

.repo-head {
  flex: none;
  display: flex;
  align-items: center;
  height: 94px;
  border-bottom: 1px solid #3d444d;
}

.avatar {
  width: 36px;
  height: 36px;
}

h1 {
  margin: 0 13px 0 12px;
  font-size: 28px;
}

.visibility {
  padding: 0 10px;
  border: 1px solid #3d444d;
  border-radius: 15px;
  color: #9198a1;
  font-size: 17px;
}

.actions {
  display: flex;
  gap: 12px;
  margin: 0 0 4px auto;
}

.btn {
  display: flex;
  align-items: center;
  gap: 12px;
  height: 48px;
  padding: 0 16px 0 18px;
  border: 1px solid #3d444d;
  border-radius: 9px;
  background: #212830;
  font-weight: 600;
}

.btn .ico {
  color: #9198a1;
}

.btn.small {
  height: 42px;
  gap: 7px;
  padding: 0 18px;
  font-size: 17px;
}

.btn.watch {
  gap: 6px;
  padding: 0 6px 0 12px;
}

.btn.watch .counter {
  margin-left: 5px;
}

.btn-group {
  display: flex;
}

.btn-group .btn:first-child {
  border-radius: 9px 0 0 9px;
}

.btn-group .btn:first-child .ico {
  margin-right: 6px;
}

.btn-group .more {
  width: 50px;
  padding: 0 12px;
  border-left: 0;
  border-radius: 0 9px 9px 0;
}

.btn.green {
  border-color: #4c9a3a;
  background: #3d8829;
}

.btn.green .ico {
  color: #fff;
}

.columns {
  flex: 1;
  min-height: 0;
  display: grid;
  grid-template-columns: minmax(0, 1fr) 444px;
  gap: 36px;
  padding-top: 36px;
}

.main-col {
  display: flex;
  flex-direction: column;
  gap: 24px;
  min-height: 0;
}

.file-nav {
  display: flex;
  align-items: center;
  gap: 12px;
}

.branch {
  margin-right: 6px;
}

.stat {
  display: flex;
  align-items: center;
  gap: 7px;
  color: #9198a1;
}

.stat strong {
  color: #f0f6fc;
  font-weight: 600;
}

.go-to {
  display: flex;
  align-items: center;
  gap: 12px;
  width: 344px;
  height: 48px;
  margin-left: auto;
  padding: 0 10px 0 18px;
  border: 1px solid #3d444d;
  border-radius: 9px;
  color: #9198a1;
}

.go-to input {
  flex: 1;
  min-width: 0;
  padding: 0;
  border: 0;
  outline: 0;
  background: none;
}

.go-to input::placeholder {
  color: #9198a1;
}

kbd {
  width: 22px;
  height: 29px;
  border: 1px solid #30363d;
  border-bottom-width: 3px;
  border-radius: 8px;
  background: #151b23;
  color: #f0f6fc;
  font: 16px/24px "DejaVu Sans Mono", monospace;
  text-align: center;
}

.box {
  border: 1px solid #3d444d;
  border-radius: 9px;
}

.branch-info {
  height: 75px;
  padding: 22px 24px;
  background: #171c24;
}

.branch-info a {
  color: #4f86f7;
}

code {
  padding: 6px 8px;
  border-radius: 9px;
  background: #1c2740;
  color: #9198a1;
  font-family: "Liberation Mono", monospace;
  font-size: 17px;
}

.commit {
  display: flex;
  align-items: center;
  height: 78px;
  padding: 0 30px 0 20px;
  border-radius: 9px 9px 0 0;
  background: #171c24;
}

.commit .avatar {
  width: 30px;
  height: 30px;
}

.author {
  margin: 0 11px;
  font-weight: 600;
}

.message {
  color: #9198a1;
}

.sha {
  margin-left: auto;
  color: #9198a1;
  font-size: 17px;
}

.count {
  display: flex;
  align-items: center;
  gap: 6px;
  margin-left: 24px;
  font-size: 17px;
  font-weight: 600;
}

.commit .ico {
  color: #9198a1;
}

table {
  width: 100%;
  table-layout: fixed;
  border-collapse: collapse;
}

td {
  height: 61px;
  padding: 2px 0 0;
  border-top: 1px solid #3d444d;
  color: #9198a1;
}

.name {
  width: 42%;
  padding-left: 24px;
}

.name a {
  margin-left: 15px;
  color: #f0f6fc;
}

.name .ico {
  vertical-align: -4px;
}

.date {
  width: 20%;
  padding-right: 24px;
  text-align: right;
}

.readme {
  flex: 1;
  border-bottom: 0;
  border-radius: 9px 9px 0 0;
}

.readme-head {
  display: flex;
  align-items: center;
  justify-content: space-between;
  height: 73px;
  padding: 0 33px 0 12px;
  border-bottom: 2px solid #30363d;
}

.readme-tab {
  display: flex;
  align-items: center;
  align-self: stretch;
  gap: 12px;
  padding: 3px 14px 0 12px;
  border-bottom: 3px solid #f78166;
  font-weight: 600;
}

.readme .ico {
  color: #9198a1;
}

.sidebar section {
  height: 136px;
  padding-top: 30px;
  border-bottom: 1px solid #2f353d;
}

.sidebar h2 {
  font-size: 22px;
}

.sidebar p {
  margin-top: 26px;
  color: #9198a1;
  font-size: 17px;
  font-weight: 400;
}

.sidebar .about {
  height: auto;
  padding: 11px 0 14px;
}

.sidebar .empty {
  margin-top: 32px;
  font-size: 23px;
  font-style: italic;
  white-space: nowrap;
}

.about ul {
  margin-top: 21px;
  list-style: none;
  font-weight: 400;
}

.about a {
  display: flex;
  align-items: center;
  gap: 18px;
  height: 44px;
  color: #9198a1;
}

.about strong {
  font-weight: 600;
}

.scrollbar {
  display: flex;
  flex-direction: column;
  align-items: center;
  width: 25px;
  padding: 10px 2px;
  background: #424242;
  color: #fff;
}

.arrow {
  width: 12px;
  height: 8px;
}

.thumb {
  width: 100%;
  height: 36%;
  margin: 36px 0 auto;
  background: #686868;
}
```
